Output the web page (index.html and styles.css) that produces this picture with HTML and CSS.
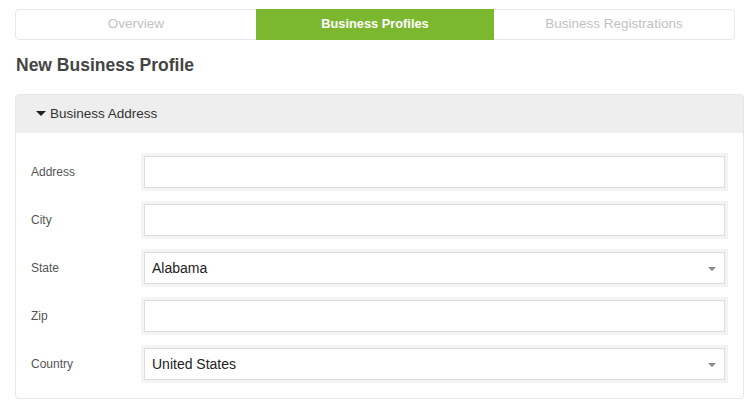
FILE: index.html
```html
<!DOCTYPE html>
<html>
<head>
<meta charset="utf-8">
<link rel="stylesheet" href="styles.css">
</head>
<body>
<div class="page">
  <nav class="tabs">
    <div class="tab">Overview</div>
    <div class="tab active">Business Profiles</div>
    <div class="tab">Business Registrations</div>
  </nav>
  <h1 class="title">New Business Profile</h1>
  <section class="panel">
    <header class="panel-head"><span class="caret"></span>Business Address</header>
    <div class="panel-body">
      <label class="lbl">Address</label>
      <div class="field"></div>
      <label class="lbl">City</label>
      <div class="field"></div>
      <label class="lbl">State</label>
      <div class="field select">Alabama</div>
      <label class="lbl">Zip</label>
      <div class="field"></div>
      <label class="lbl">Country</label>
      <div class="field select">United States</div>
    </div>
  </section>
</div>
</body>
</html>
```
FILE: styles.css
```css
* { box-sizing: border-box; }
html, body { margin: 0; padding: 0; background: #fff; }
body { font-family: "Liberation Sans", Arial, Helvetica, sans-serif; color: #333; }

.page { padding: 9px 10px 0 15px; }

.tabs {
  display: grid;
  grid-template-columns: 240px 238px 240px;
  width: 720px;
  height: 31px;
  border: 1px solid #e8e8e8;
  border-radius: 4px;
}
.tab {
  display: flex;
  align-items: center;
  justify-content: center;
  padding-bottom: 2px;
  font-size: 13.5px;
  color: #c2c2c2;
}
.tab.active {
  margin: -1px 0;
  background: #7cb82f;
  color: #fff;
  font-weight: bold;
  font-size: 12.8px;
}

.title {
  margin: 15px 0 0 1px;
  font-size: 17.5px;
  line-height: 20px;
  font-weight: bold;
  color: #444;
}

.panel {
  margin-top: 19px;
  width: 729px;
  border: 1px solid #e6e6e6;
  border-radius: 4px;
}
.panel-head {
  display: flex;
  align-items: center;
  height: 38px;
  padding-left: 20px;
  padding-bottom: 1px;
  background: #eeeeee;
  border-radius: 3px 3px 0 0;
  font-size: 13.5px;
  color: #333;
}
.caret {
  width: 0;
  height: 0;
  border-left: 5px solid transparent;
  border-right: 5px solid transparent;
  border-top: 5px solid #222;
  margin-right: 4px;
}

.panel-body {
  display: grid;
  grid-template-columns: 113px 581px;
  row-gap: 16px;
  align-items: center;
  padding: 23px 18px 18px 15px;
}
.lbl {
  font-size: 12px;
  color: #555;
}
.field {
  position: relative;
  height: 32px;
  border: 1px solid #dcdcdc;
  box-shadow: 0 0 0 3px #f4f4f4;
  background: #fff;
  display: flex;
  align-items: center;
  padding-left: 7px;
  font-size: 14px;
  color: #222;
}
.select::after {
  content: "";
  position: absolute;
  right: 8px;
  top: 14px;
  width: 0;
  height: 0;
  border-left: 4px solid transparent;
  border-right: 4px solid transparent;
  border-top: 4px solid #8a8a8a;
}
```
